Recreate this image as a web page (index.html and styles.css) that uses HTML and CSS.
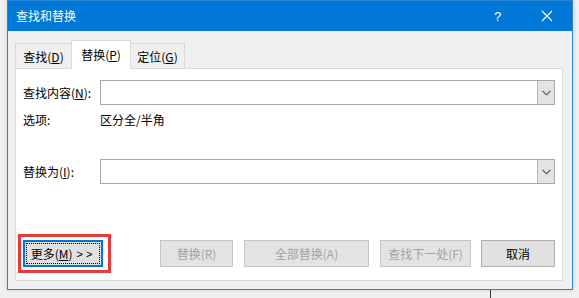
FILE: index.html
```html
<!DOCTYPE html>
<html lang="zh">
<head>
<meta charset="utf-8">
<title>查找和替换</title>
<link rel="stylesheet" href="styles.css">
</head>
<body>
<div class="window">
  <div class="titlebar">
    <span class="title">查找和替换</span>
    <span class="help">?</span>
    <span class="close"><svg width="12" height="12" viewBox="0 0 12 12"><path d="M1 1 L11 11 M11 1 L1 11" stroke="#fff" stroke-width="1.2" fill="none"/></svg></span>
  </div>
  <div class="body">
    <div class="tabs">
      <div class="tab t1">查找(<u>D</u>)</div>
      <div class="tab t2 active">替换(<u>P</u>)</div>
      <div class="tab t3">定位(<u>G</u>)</div>
    </div>
    <div class="panel">
      <div class="row">
        <span class="label">查找内容(<u>N</u>):</span>
        <div class="combo">
          <div class="combo-field"></div>
          <div class="combo-btn"><svg width="9" height="6" viewBox="0 0 9 6"><path d="M0.5 0.8 L4.5 4.8 L8.5 0.8" stroke="#505050" stroke-width="1.1" fill="none"/></svg></div>
        </div>
      </div>
      <div class="row opts">
        <span class="label">选项:</span>
        <span class="value">区分全/半角</span>
      </div>
      <div class="row replace">
        <span class="label">替换为(<u>I</u>):</span>
        <div class="combo">
          <div class="combo-field"></div>
          <div class="combo-btn"><svg width="9" height="6" viewBox="0 0 9 6"><path d="M0.5 0.8 L4.5 4.8 L8.5 0.8" stroke="#505050" stroke-width="1.1" fill="none"/></svg></div>
        </div>
      </div>
      <div class="actions">
        <div class="highlight">
          <button class="btn default"><span class="focus">更多(<u>M</u>) <span class="arrows">&gt;&gt;</span></span></button>
        </div>
        <div class="spacer"></div>
        <button class="btn disabled w-replace">替换(R)</button>
        <button class="btn disabled w-all">全部替换(A)</button>
        <button class="btn disabled w-next">查找下一处(F)</button>
        <button class="btn w-cancel">取消</button>
      </div>
    </div>
  </div>
</div>
</body>
</html>
```
FILE: styles.css
```css
* { box-sizing: border-box; }
html, body { margin: 0; padding: 0; }
body {
  width: 579px;
  height: 298px;
  overflow: hidden;
  background-color: #efefef;
  background-image: linear-gradient(to right, transparent 490px, #3a3a3a 490px, #3a3a3a 491px, transparent 491px);
  font-family: "Noto Sans CJK SC", "Noto Sans", sans-serif;
  font-size: 12px;
  color: #000;
  padding-left: 7px;
}
u { text-decoration: underline; text-underline-offset: 1px; }

.window {
  width: 566px;
  border: 1px solid #2a84d6;
  background: #f0f0f0;
  box-shadow: 0 0 4px rgba(0,0,0,0.15);
}
.titlebar {
  height: 30px;
  background: #0078d7;
  display: flex;
  align-items: center;
  color: #fff;
  padding-left: 8px;
}
.title { font-size: 12px; flex: 1; margin-top: -1px; }
.help { font-size: 13px; width: 14px; margin-right: 33px; font-family: "Liberation Sans", sans-serif; }
.close { width: 12px; height: 12px; display: flex; margin-right: 19px; }

.body {
  padding: 9px 9px 8px 7px;
}
.tabs {
  display: flex;
  align-items: flex-end;
  height: 28px;
  position: relative;
  z-index: 1;
}
.tab {
  height: 25px;
  border: 1px solid #d9d9d9;
  border-bottom: none;
  background: #f0f0f0;
  display: flex;
  align-items: center;
  justify-content: center;
  white-space: nowrap;
}
.t1 { width: 56px; border-right: none; }
.t2 { width: 60px; }
.t3 { width: 54px; border-left: none; }
.tab.active {
  height: 29px;
  margin-bottom: -1px;
  background: #fff;
  padding-bottom: 2px;
}

.panel {
  height: 213px;
  background: #fff;
  border: 1px solid #d9d9d9;
  padding: 11px 7px 13px 7px;
  display: flex;
  flex-direction: column;
}
.row {
  display: flex;
  align-items: center;
}
.label { width: 77px; flex: none; white-space: nowrap; }
.opts { margin-top: 6px; height: 16px; }
.replace { margin-top: 32px; }

.combo {
  flex: 1;
  height: 25px;
  display: flex;
  border: 1px solid #a9a9a9;
  background: #fff;
}
.combo-field { flex: 1; }
.combo-btn {
  width: 17px;
  background: #e3e3e3;
  border-left: 1px solid #b4b4b4;
  display: flex;
  align-items: center;
  justify-content: center;
}

.actions {
  margin-top: auto;
  display: flex;
  align-items: center;
  gap: 11px;
}
.spacer { flex: 1; }
.btn {
  height: 27px;
  border: 1px solid #adadad;
  background: #e1e1e1;
  font-family: inherit;
  font-size: 12px;
  color: #000;
  padding: 0;
  white-space: nowrap;
}
.btn.disabled {
  color: #a3a3a3;
  border-color: #c4c4c4;
  background: #e3e3e3;
}
.w-replace { width: 73px; }
.w-all { width: 125px; }
.w-next { width: 91px; margin-right: -1px; }
.w-cancel { width: 74px; }

.highlight { position: relative; display: flex; }
.highlight::after {
  content: "";
  position: absolute;
  left: -5px;
  top: -6px;
  right: -8px;
  bottom: -6px;
  border: 3px solid #e53b3b;
  pointer-events: none;
}
.btn.default {
  width: 80px;
  border: 2px solid #0078d7;
  padding: 1px;
  display: flex;
}
.focus {
  flex: 1;
  border: 1px dotted #000;
  display: flex;
  align-items: center;
  justify-content: center;
  height: 100%;
}
.arrows { letter-spacing: 3px; margin-left: 4px; font-family: "Liberation Sans", sans-serif; font-size: 11px; }
```
